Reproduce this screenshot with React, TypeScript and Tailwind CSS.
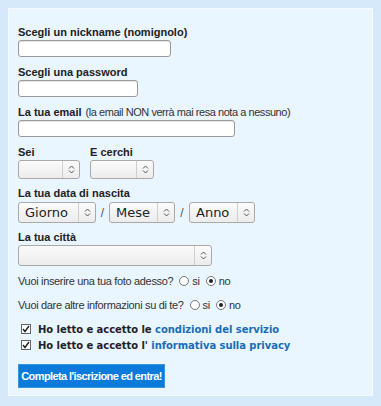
import React from "react";

const Arrow = () => (
  <svg width="7" height="9" viewBox="0 0 7 9" className="shrink-0">
    <path d="M1 3.5 L3.5 1 L6 3.5 M1 5.5 L3.5 8 L6 5.5" fill="none" stroke="#555" strokeWidth="1" />
  </svg>
);

const Select = ({ w, h = 19, text = "", big = false }: { w: number; h?: number; text?: string; big?: boolean }) => (
  <div
    className="flex items-center border border-[#a9a9a9] rounded-[3px] bg-gradient-to-b from-[#fbfbfb] to-[#ececec]"
    style={{ width: w, height: h }}
  >
    <div className={`flex-1 pl-[6px] text-[#222] ${big ? "text-[13px]" : "text-[12px]"} font-['DejaVu_Sans',sans-serif] leading-none`}>{text}</div>
    <div className="h-full w-[17px] flex items-center justify-center border-l border-[#cfcfcf]">
      <Arrow />
    </div>
  </div>
);

const Input = ({ w }: { w: number }) => (
  <div className="h-[17px] border border-[#999] rounded-[3px] bg-white shadow-[inset_0_1px_1px_rgba(0,0,0,0.1)]" style={{ width: w }} />
);

const Radio = ({ checked }: { checked?: boolean }) => (
  <span className="inline-flex items-center justify-center w-[10px] h-[10px] rounded-full border border-[#777] bg-white mx-[3px]">
    {checked && <span className="w-[4px] h-[4px] rounded-full bg-[#222]" />}
  </span>
);

const Check = () => (
  <span className="inline-flex items-center justify-center w-[10px] h-[10px] border border-[#666] bg-white shrink-0">
    <svg width="8" height="8" viewBox="0 0 8 8">
      <path d="M1 4 L3 6.5 L7 1" fill="none" stroke="#222" strokeWidth="1.4" />
    </svg>
  </span>
);

const Label = ({ children }: { children: React.ReactNode }) => (
  <div className="text-[11px] font-bold text-[#222] leading-[13px] h-[13px] font-['Liberation_Sans',sans-serif]">{children}</div>
);

export default function App() {
  return (
    <div className="w-[381px] h-[406px] bg-[#d6e9fa] pt-[8px] pl-[8px] pr-[8px] pb-[10px] font-['Liberation_Sans',sans-serif]">
      <div className="h-full border border-[#f4faff] bg-[#e9f5ff] pl-[9px] pt-[17px]">
        <Label>Scegli un nickname (nomignolo)</Label>
        <div className="mt-[1px]"><Input w={153} /></div>
        <div className="mt-[9px]"><Label>Scegli una password</Label></div>
        <div className="mt-[1px]"><Input w={120} /></div>
        <div className="mt-[9px] flex items-baseline h-[13px] leading-[13px]">
          <Label>La tua email</Label>
          <span className="ml-[4px] text-[11px] tracking-[-0.45px] text-[#333]">(la email NON verrà mai resa nota a nessuno)</span>
        </div>
        <div className="mt-[1px]"><Input w={217} /></div>
        <div className="mt-[9px] flex gap-[10px]">
          <div>
            <Label>Sei</Label>
            <div className="mt-[1px]"><Select w={62} /></div>
          </div>
          <div>
            <Label>E cerchi</Label>
            <div className="mt-[1px]"><Select w={64} /></div>
          </div>
        </div>
        <div className="mt-[8px]"><Label>La tua data di nascita</Label></div>
        <div className="mt-[2px] flex items-center text-[12px] text-[#555]">
          <Select w={78} h={21} text="Giorno" big />
          <span className="w-[13px] text-center">/</span>
          <Select w={66} h={21} text="Mese" big />
          <span className="w-[14px] text-center">/</span>
          <Select w={66} h={21} text="Anno" big />
        </div>
        <div className="mt-[8px]"><Label>La tua città</Label></div>
        <div className="mt-[1px]"><Select w={194} h={21} /></div>
        <div className="mt-[8px] h-[14px] flex items-center text-[11px] text-[#333] tracking-[-0.33px]">
          Vuoi inserire una tua foto adesso?<span className="w-[3px]" /><Radio /> si<span className="w-[3px]" /><Radio checked /> no
        </div>
        <div className="mt-[10px] h-[14px] flex items-center text-[11px] text-[#333] tracking-[-0.33px]">
          Vuoi dare altre informazioni su di te?<span className="w-[3px]" /><Radio /> si<span className="w-[3px]" /><Radio checked /> no
        </div>
        <div className="mt-[10px] h-[14px] ml-[3px] flex items-center gap-[7px] text-[10px] font-bold text-[#222] font-['DejaVu_Sans',sans-serif] tracking-[-0.05px]">
          <Check />
          <span>Ho letto e accetto le <span className="text-[#1a6cb8]">condizioni del servizio</span></span>
        </div>
        <div className="mt-[2px] h-[14px] ml-[3px] flex items-center gap-[7px] text-[10px] font-bold text-[#222] font-['DejaVu_Sans',sans-serif] tracking-[-0.05px]">
          <Check />
          <span>Ho letto e accetto l' <span className="text-[#1a6cb8]">informativa sulla privacy</span></span>
        </div>
        <div className="mt-[11px]">
          <button className="h-[24px] w-[147px] bg-[#0a7bdb] border border-[#3a94e0] text-white text-[11px] font-bold tracking-[-0.6px] font-['Liberation_Sans',sans-serif]">
            Completa l'iscrizione ed entra!
          </button>
        </div>
      </div>
    </div>
  );
}
